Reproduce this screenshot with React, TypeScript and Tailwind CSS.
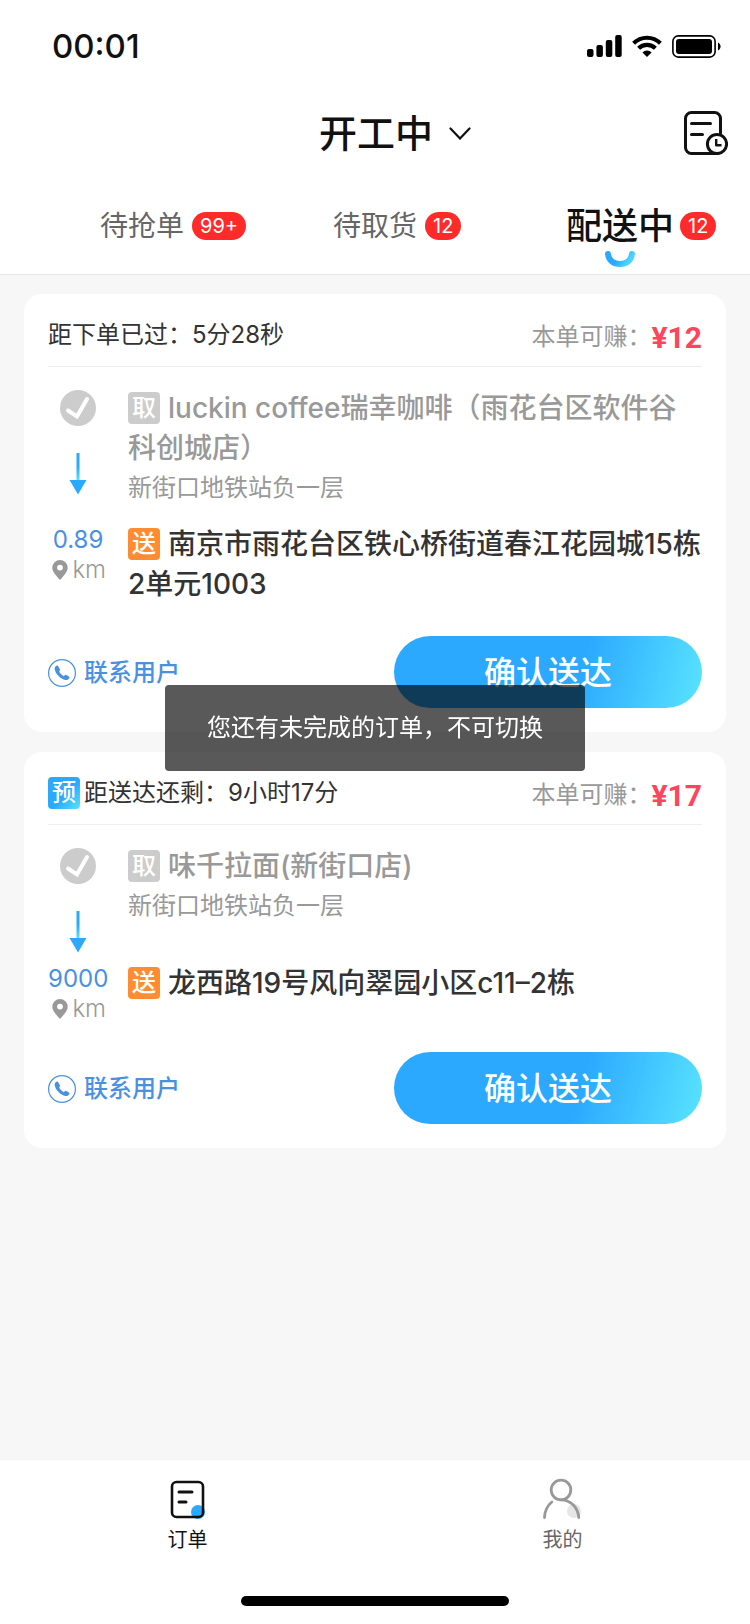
import { useState } from 'react'
import type { ReactNode } from 'react'

interface Order {
  id: number
  reserved: boolean
  timeLabel: string
  timeValue: string
  income: number
  shop: string
  shopAddress: string
  address: string
  distance: string
}

const ORDERS: Order[] = [
  {
    id: 1,
    reserved: false,
    timeLabel: '距下单已过：',
    timeValue: '5分28秒',
    income: 12,
    shop: 'luckin coffee瑞幸咖啡（雨花台区软件谷科创城店）',
    shopAddress: '新街口地铁站负一层',
    address: '南京市雨花台区铁心桥街道春江花园城15栋2单元1003',
    distance: '0.89',
  },
  {
    id: 2,
    reserved: true,
    timeLabel: '距送达还剩：',
    timeValue: '9小时17分',
    income: 17,
    shop: '味千拉面(新街口店)',
    shopAddress: '新街口地铁站负一层',
    address: '龙西路19号风向翠园小区c11–2栋',
    distance: '9000',
  },
]

const TABS = [
  { key: 'grab', label: '待抢单', count: '99+' },
  { key: 'pickup', label: '待取货', count: '12' },
  { key: 'delivering', label: '配送中', count: '12' },
]

function StatusBar() {
  return (
    <div className="flex h-[88px] items-center justify-between pt-1 pr-[29px] pl-[52px]">
      <span className="pt-0.5 text-[33px] font-medium text-[#111]">00:01</span>
      <div className="flex items-center gap-2.5 text-black">
        <svg width="35" height="22" viewBox="0 0 35 22" fill="currentColor" aria-hidden="true">
          <rect x="0" y="14" width="6.5" height="8" rx="2" />
          <rect x="9.4" y="10" width="6.5" height="12" rx="2" />
          <rect x="18.8" y="5" width="6.5" height="17" rx="2" />
          <rect x="28.2" y="0" width="6.5" height="22" rx="2" />
        </svg>
        <svg width="30" height="22" viewBox="0 0 30 22" aria-hidden="true">
          <g fill="none" stroke="currentColor" strokeWidth="4.2">
            <path d="M1.6 8.2a19.2 19.2 0 0 1 26.8 0" />
            <path d="M6.6 13.2a12.2 12.2 0 0 1 16.8 0" />
          </g>
          <path d="M15 22l-4.6-4.6a6.6 6.6 0 0 1 9.2 0z" fill="currentColor" />
        </svg>
        <svg width="49" height="23" viewBox="0 0 49 23" aria-hidden="true">
          <rect x="0.9" y="0.9" width="42.2" height="21.2" rx="5.4" fill="none" stroke="currentColor" strokeWidth="1.6" />
          <rect x="4" y="4" width="36" height="15" rx="3" fill="currentColor" />
          <path d="M46 7.5c3.4 1.5 3.4 6.5 0 8z" fill="currentColor" />
        </svg>
      </div>
    </div>
  )
}

function RecordIcon() {
  return (
    <svg width="44" height="44" viewBox="0 0 44 44" fill="none" stroke="#111" strokeWidth="3" strokeLinecap="round" aria-hidden="true">
      <path d="M36.5 22V7.5a6 6 0 0 0-6-6h-23a6 6 0 0 0-6 6v29a6 6 0 0 0 6 6H31" />
      <path d="M7.5 12.5h19M7.5 23.5h11" />
      <circle cx="33" cy="33" r="9.6" fill="#fff" />
      <path d="M32.2 28v6.3h5.3" strokeWidth="2.4" strokeLinejoin="round" strokeLinecap="butt" />
    </svg>
  )
}

function SmileMark() {
  return (
    <svg width="30" height="16" viewBox="0 0 30 16" className="absolute top-full left-1/2 -translate-x-1/2" aria-hidden="true">
      <defs>
        <linearGradient id="smile" x1="0" y1="0" x2="1" y2="0.3">
          <stop offset="0.5" stopColor="#2ba9ff" />
          <stop offset="1" stopColor="#4ed4ff" />
        </linearGradient>
      </defs>
      <path d="M3 3c.8 6.5 5.5 10 12 10s11.2-3.5 12-10" fill="none" stroke="url(#smile)" strokeWidth="6" strokeLinecap="round" />
    </svg>
  )
}

function DoneIcon() {
  return (
    <svg width="36" height="36" viewBox="0 0 36 36" className="shrink-0" aria-hidden="true">
      <circle cx="18" cy="18" r="18" fill="#ccc" />
      <path d="M8 20.5l9 6 10-17.5" fill="none" stroke="#fff" strokeWidth="4" strokeLinecap="round" strokeLinejoin="miter" />
    </svg>
  )
}

function ArrowDown() {
  return (
    <svg width="18" height="42" viewBox="0 0 18 42" className="shrink-0" aria-hidden="true">
      <defs>
        <linearGradient id="arrow" x1="0" y1="0" x2="0" y2="1">
          <stop offset="0.5" stopColor="#2ba9ff" />
          <stop offset="1" stopColor="#59e4ff" />
        </linearGradient>
      </defs>
      <rect x="7.5" y="0" width="3" height="28" fill="url(#arrow)" />
      <path d="M0.5 27h17L9 41.5z" fill="#2ba9ff" />
    </svg>
  )
}

function PinIcon() {
  return (
    <svg width="16" height="20" viewBox="0 0 16 20" aria-hidden="true">
      <path
        d="M8 0a7.7 7.7 0 0 0-7.7 7.7C.3 12.2 5 16 7 19c.6.9 1.4.9 2 0 2-3 6.7-6.8 6.7-11.3A7.7 7.7 0 0 0 8 0zm0 4.7a2.9 2.9 0 1 1 0 5.8 2.9 2.9 0 0 1 0-5.8z"
        fill="#999"
      />
    </svg>
  )
}

function PhoneIcon() {
  return (
    <svg width="28" height="28" viewBox="0 0 28 28" aria-hidden="true">
      <circle cx="14" cy="14" r="13.4" fill="none" stroke="#4a90e2" strokeWidth="1.2" />
      <path
        d="M8.6 6.8c-1.2.7-2.2 1.7-1.9 3.5.9 5 5.8 9.7 10.7 10.7 1.7.3 3-.5 3.8-1.7.5-.8.3-1.3-.4-1.8l-2.3-1.5c-.7-.4-1.2-.3-1.8.3l-.8.9c-1.900-.9-3.700-2.800-4.700-4.700l.5-.7c.4-.5.5-1 .2-1.600L10.200 7.300c-.4-.7-.9-.9-1.600-.5z"
        fill="#4a90e2"
      />
    </svg>
  )
}

function Tag({ className, children }: { className: string; children: ReactNode }) {
  return (
    <span className={`flex h-8 w-8 shrink-0 items-center justify-center rounded-[4px] text-2xl leading-none text-white ${className}`}>
      {children}
    </span>
  )
}

function OrderCard({ order }: { order: Order }) {
  return (
    <article className="rounded-[18px] bg-white px-6 pb-6">
      <header className="flex h-[73px] items-center justify-between border-b border-[#eee] pt-2.5 text-2xl">
        <h2 className="flex items-center gap-1 text-[#333]">
          {order.reserved && <Tag className="bg-linear-135 from-[#2ba9ff] from-55% to-[#59e4ff] font-medium">预</Tag>}
          <span>
            {order.timeLabel}
            {order.timeValue}
          </span>
        </h2>
        <p className="flex items-center pt-1 text-[#999]">
          本单可赚：
          <strong className="pt-0.5 font-[Roboto,sans-serif] text-[30px] leading-8 font-bold text-[#ff455d]">¥{order.income}</strong>
        </p>
      </header>

      {/* Route: shop on top, customer below */}
      <div className="mt-[21px] grid grid-cols-[60px_1fr] gap-x-5 gap-y-4">
        <div className="flex h-[101px] flex-col items-center gap-[27px] pt-0.5">
          <DoneIcon />
          <ArrowDown />
        </div>
        <div className="text-[#999]">
          <h3 className="text-[28px] leading-10 font-medium">
            <Tag className="float-left mt-1 mr-2 bg-[#ccc]">取</Tag>
            {order.shop}
          </h3>
          <p className="text-2xl leading-10">{order.shopAddress}</p>
        </div>

        <div className="h-[57px] text-center text-2xl">
          <p className="leading-8 text-[#4a90e2]">{order.distance}</p>
          <p className="flex items-center justify-end gap-1 pr-0.5 leading-7 font-light text-[#999]">
            <PinIcon />
            km
          </p>
        </div>
        <p className="text-[28px] leading-10 font-medium text-[#333]">
          <Tag className="float-left mt-1 mr-2 bg-[#ff8c30]">送</Tag>
          {order.address}
        </p>
      </div>

      <footer className="mt-8 flex items-center justify-between">
        <button type="button" className="flex items-center gap-2 pt-0.5 text-2xl font-medium text-[#4a90e2]">
          <PhoneIcon />
          联系用户
        </button>
        <button
          type="button"
          className="h-[72px] w-[308px] rounded-full bg-[linear-gradient(105deg,#2ba9ff_60%,#59e4ff)] pt-0.5 text-[32px] font-medium text-white"
        >
          确认送达
        </button>
      </footer>
    </article>
  )
}

export default function App() {
  const [activeTab, setActiveTab] = useState('delivering')

  return (
    <div className="flex min-h-screen flex-col bg-[#f7f7f7] font-[Inter,'Noto_Sans_CJK_SC',sans-serif]">
      <div className="border-b border-[#e8e8e8] bg-white">
        <StatusBar />
        <div className="grid h-[90px] grid-cols-[1fr_auto_1fr] items-center px-[22px]">
          <button type="button" className="col-start-2 flex items-center gap-4 pl-10 text-[38px] font-medium text-[#111]">
            开工中
            <svg width="22" height="13" viewBox="0 0 22 13" fill="none" stroke="#111" strokeWidth="2.2" strokeLinecap="round" aria-hidden="true">
              <path d="M1.5 1.5L11 11.5l9.5-10" />
            </svg>
          </button>
          <button type="button" aria-label="历史订单" className="justify-self-end">
            <RecordIcon />
          </button>
        </div>
        <nav className="grid h-24 grid-cols-[233fr_233fr_184fr] items-center pl-[100px]">
          {TABS.map((tab) => {
            const active = tab.key === activeTab
            return (
              <button
                key={tab.key}
                type="button"
                onClick={() => setActiveTab(tab.key)}
                className={`flex items-center whitespace-nowrap ${active ? 'gap-1.5' : 'gap-2'}`}
              >
                <span className={active ? 'relative text-[36px] leading-[50px] font-medium text-[#111]' : 'text-[28px] text-[#666]'}>
                  {tab.label}
                  {active && <SmileMark />}
                </span>
                <span className="flex h-7 items-center rounded-full bg-[#ff2a2a] px-2 text-xl text-white">{tab.count}</span>
              </button>
            )
          })}
        </nav>
      </div>

      <main className="flex flex-1 flex-col gap-5 px-6 pt-[19px] pb-10">
        {ORDERS.map((order) => (
          <OrderCard key={order.id} order={order} />
        ))}
      </main>

      <footer className="bg-white pb-[18px]">
        <nav className="grid h-[137px] grid-cols-2 items-start border-t border-[#f2f2f2] pt-[18px] text-xl">
          <a href="#orders" className="flex flex-col items-center gap-1 text-[#111]">
            <svg width="36" height="44" viewBox="0 0 36 44" fill="none" aria-hidden="true">
              <circle cx="28" cy="34" r="7" fill="#2ba9ff" />
              <rect x="2" y="4" width="31" height="35" rx="4.5" stroke="#111" strokeWidth="2.6" />
              <path d="M9 14h13M9 24h7" stroke="#111" strokeWidth="3" strokeLinecap="round" />
            </svg>
            订单
          </a>
          <a href="#me" className="flex flex-col items-center gap-1 text-[#666]">
            <svg width="40" height="44" viewBox="0 0 40 44" fill="none" aria-hidden="true">
              <circle cx="31" cy="33" r="7" fill="#e6e6e6" />
              <g stroke="#999" strokeWidth="2.8" strokeLinecap="round">
                <circle cx="18" cy="12" r="9.8" />
                <path d="M1.5 39.5c.3-6.5 3-12 7.3-15.5M18 21.8c10 0 17 8 17.8 17.7" />
              </g>
            </svg>
            我的
          </a>
        </nav>
        <div className="mx-auto h-2.5 w-[268px] rounded-full bg-black" />
      </footer>

      <div
        role="status"
        className="fixed top-[685px] left-1/2 flex h-[86px] w-[420px] -translate-x-1/2 items-center justify-center rounded-[4px] bg-black/65 text-2xl whitespace-nowrap text-white"
      >
        您还有未完成的订单，不可切换
      </div>
    </div>
  )
}
